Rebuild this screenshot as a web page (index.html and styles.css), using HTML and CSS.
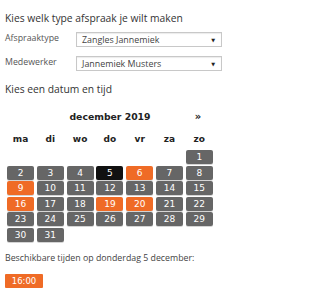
FILE: index.html
```html
<!DOCTYPE html>
<html>
<head>
<meta charset="utf-8">
<link rel="stylesheet" href="styles.css">
</head>
<body>
<div class="page">
  <h2 class="title">Kies welk type afspraak je wilt maken</h2>
  <div class="form">
    <div class="field">
      <span class="label">Afspraaktype</span>
      <div class="select"><span>Zangles Jannemiek</span><span class="arrow">▼</span></div>
    </div>
    <div class="field">
      <span class="label">Medewerker</span>
      <div class="select"><span>Jannemiek Musters</span><span class="arrow">▼</span></div>
    </div>
  </div>
  <h2 class="title title2">Kies een datum en tijd</h2>
  <div class="calendar">
    <div class="cal-head">
      <span class="prev"></span>
      <span class="month">december 2019</span>
      <span class="next">»</span>
    </div>
    <div class="weekdays">
      <span>ma</span><span>di</span><span>wo</span><span>do</span><span>vr</span><span>za</span><span>zo</span>
    </div>
    <div class="days">
      <span class="empty"></span><span class="empty"></span><span class="empty"></span><span class="empty"></span><span class="empty"></span><span class="empty"></span>
      <span class="day">1</span>
      <span class="day">2</span><span class="day">3</span><span class="day">4</span><span class="day selected">5</span><span class="day avail">6</span><span class="day">7</span><span class="day">8</span>
      <span class="day avail">9</span><span class="day">10</span><span class="day">11</span><span class="day">12</span><span class="day">13</span><span class="day">14</span><span class="day">15</span>
      <span class="day avail">16</span><span class="day">17</span><span class="day">18</span><span class="day avail">19</span><span class="day avail">20</span><span class="day">21</span><span class="day">22</span>
      <span class="day">23</span><span class="day">24</span><span class="day">25</span><span class="day">26</span><span class="day">27</span><span class="day">28</span><span class="day">29</span>
      <span class="day">30</span><span class="day">31</span>
    </div>
  </div>
  <p class="avail-text">Beschikbare tijden op donderdag 5 december:</p>
  <div class="times"><button class="time">16:00</button></div>
</div>
</body>
</html>
```

FILE: styles.css
```css
html, body {
  margin: 0;
  padding: 0;
  background: #fff;
}
.page {
  padding: 11px 7px 0 5px;
  font-family: "Open Sans", "DejaVu Sans", sans-serif;
  color: #333;
}
.title {
  margin: 0;
  font-size: 10.3px;
  line-height: 14px;
  font-weight: normal;
  color: #333;
}
.form {
  margin-top: 7px;
  display: flex;
  flex-direction: column;
  gap: 9px;
}
.field {
  display: flex;
  align-items: flex-start;
}
.label {
  width: 71px;
  font-size: 8.8px;
  line-height: 12px;
  color: #555;
}
.select {
  width: 146px;
  height: 15px;
  box-sizing: border-box;
  border: 1px solid #c8c8c8;
  box-shadow: inset 0 1px 1px rgba(0,0,0,0.08);
  display: flex;
  align-items: center;
  justify-content: space-between;
  padding: 0 6px 0 5px;
  font-size: 8.9px;
  color: #444;
}
.arrow {
  font-size: 5px;
  color: #222;
}
.title2 {
  margin-top: 11px;
}
.calendar {
  margin-top: 14px;
  width: 206px;
  margin-left: 2px;
  font-family: "DejaVu Sans", sans-serif;
}
.cal-head {
  display: grid;
  grid-template-columns: 29.8px 1fr 29.8px;
  height: 14px;
  line-height: 14px;
  font-size: 9.3px;
  font-weight: bold;
  color: #222;
  text-align: center;
}
.next {
  font-size: 10px;
}
.weekdays {
  margin-top: 8px;
  display: grid;
  grid-template-columns: repeat(7, 27px);
  column-gap: 2.8px;
  height: 14px;
  line-height: 14px;
  font-size: 9px;
  font-weight: bold;
  color: #222;
  text-align: center;
}
.days {
  margin-top: 4px;
  display: grid;
  grid-template-columns: repeat(7, 27px);
  grid-auto-rows: 14px;
  column-gap: 2.8px;
  row-gap: 1.6px;
}
.day {
  background: #666;
  color: #fff;
  border-radius: 2px;
  font-size: 9px;
  font-weight: normal;
  line-height: 14px;
  text-align: center;
  box-shadow: 0 1px 0 #d4d4d4;
}
.day.avail {
  background: #ef6b26;
}
.day.selected {
  background: #111;
}
.avail-text {
  margin: 9px 0 0 0;
  font-size: 8.8px;
  line-height: 14px;
  color: #444;
}
.times {
  margin-top: 9px;
  display: flex;
}
.time {
  width: 38px;
  height: 14px;
  padding: 0;
  border: none;
  border-radius: 1px;
  background: #ef6b26;
  color: #fff;
  font-family: "DejaVu Sans", sans-serif;
  font-size: 8.5px;
  line-height: 14px;
}
```
